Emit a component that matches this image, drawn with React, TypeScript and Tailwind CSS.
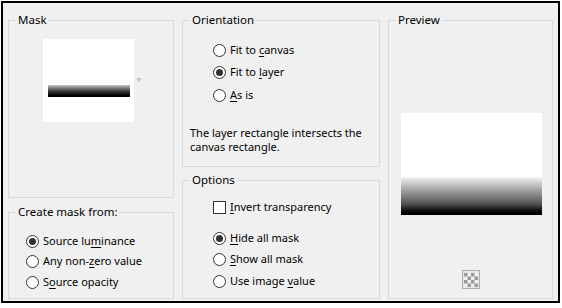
import type { ReactNode } from "react";

// Windows-style "Mask" dialog recreation

function Radio({ checked, children }: { checked?: boolean; children: ReactNode }) {
  return (
    <div className="flex h-[16px] items-center">
      <span className="flex h-[13px] w-[13px] shrink-0 items-center justify-center rounded-full border border-[#333333] bg-white">
        {checked && <span className="h-[7px] w-[7px] rounded-full bg-[#333333]" />}
      </span>
      <span className="ml-[4px] whitespace-nowrap">{children}</span>
    </div>
  );
}

function Key({ children }: { children: ReactNode }) {
  return <span className="underline decoration-1 underline-offset-[2px]">{children}</span>;
}

function Group({
  title,
  className,
  children,
}: {
  title: string;
  className?: string;
  children: ReactNode;
}) {
  return (
    <fieldset className={`min-w-0 border border-[#d9d9d9] ${className ?? ""}`}>
      <legend className="ml-[7px] px-[2px] text-[11.5px] leading-[16px]">{title}</legend>
      {children}
    </fieldset>
  );
}

export default function App() {
  return (
    <div
      className="h-[308px] w-[562px] overflow-hidden bg-white pl-[1px] pt-[1px] text-[11px] text-black"
      style={{ fontFamily: '"Segoe UI", "Noto Sans", "Open Sans", sans-serif' }}
    >
      <div className="flex h-[302px] w-[559px] gap-[8px] border-2 border-black bg-[#f0f0f0] pl-[5px] pt-[9px]">
        {/* Left column */}
        <div className="flex w-[166px] flex-col gap-[6px]">
          <Group title="Mask" className="h-[186px]">
            <div className="ml-[34px] mt-[11px] flex items-center gap-[2px]">
              <div className="h-[83px] w-[91px] bg-white pl-[5px] pt-[46px]">
                <div className="h-[12px] w-[82px] bg-linear-to-b from-[#c8c8c8] via-[#404040] to-black" />
              </div>
              <svg width="6" height="4" viewBox="0 0 6 4" className="mb-[2px]">
                <path d="M0 0 H6 L3 4 Z" fill="#c4c4c4" />
              </svg>
            </div>
          </Group>
          <Group title="Create mask from:" className="h-[95px]">
            <div className="ml-[17px] mt-[13px] flex flex-col gap-[4.5px]">
              <Radio checked>
                Source lu<Key>m</Key>inance
              </Radio>
              <Radio>
                Any non-<Key>z</Key>ero value
              </Radio>
              <Radio>
                S<Key>o</Key>urce opacity
              </Radio>
            </div>
          </Group>
        </div>

        {/* Middle column */}
        <div className="flex w-[198px] flex-col gap-[5px]">
          <Group title="Orientation" className="h-[155px]">
            <div className="ml-[30px] mt-[14px] flex flex-col gap-[6.5px]">
              <Radio>
                Fit to <Key>c</Key>anvas
              </Radio>
              <Radio checked>
                Fit to <Key>l</Key>ayer
              </Radio>
              <Radio>
                <Key>A</Key>s is
              </Radio>
            </div>
            <p className="ml-[7px] mt-[23px] leading-[13.5px]">
              The layer rectangle intersects the
              <br />
              canvas rectangle.
            </p>
          </Group>
          <Group title="Options" className="h-[127px]">
            <div className="ml-[30px] mt-[11px] flex h-[16px] items-center">
              <span className="h-[13px] w-[13px] border border-[#333333] bg-white" />
              <span className="ml-[4px]">
                <Key>I</Key>nvert transparency
              </span>
            </div>
            <div className="ml-[30px] mt-[15px] flex flex-col gap-[5.5px]">
              <Radio checked>
                <Key>H</Key>ide all mask
              </Radio>
              <Radio>
                <Key>S</Key>how all mask
              </Radio>
              <Radio>
                Use image <Key>v</Key>alue
              </Radio>
            </div>
          </Group>
        </div>

        {/* Right column */}
        <Group title="Preview" className="h-[287px] w-[165px]">
          <div className="flex flex-col items-center">
            <div className="ml-[2px] mt-[85px] h-[102px] w-[141px] bg-white pt-[64px]">
              <div className="h-[38px] w-full bg-linear-to-b from-[#f4f4f4] via-[#555555] via-70% to-black" />
            </div>
            <div className="mt-[55px] flex h-[19px] w-[18px] items-center justify-center border border-[#adadad] bg-[#e8e8e8]">
              <svg width="14" height="14" viewBox="0 0 14 14">
                <rect width="14" height="14" fill="#f2f2f2" />
                {[0, 1, 2, 3].flatMap((r) =>
                  [0, 1, 2, 3]
                    .filter((c) => (r + c) % 2 === 0)
                    .map((c) => (
                      <rect key={`${r}-${c}`} x={c * 3.5} y={r * 3.5} width="3.5" height="3.5" fill="#9a9a9a" />
                    )),
                )}
              </svg>
            </div>
          </div>
        </Group>
      </div>
    </div>
  );
}
